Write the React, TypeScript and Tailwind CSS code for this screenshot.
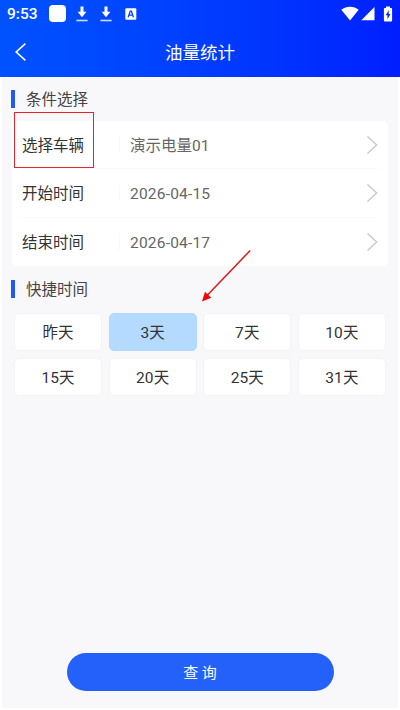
import { useState } from "react";

const fields = [
  { label: "选择车辆", value: "演示电量01", height: "h-[48px]", tracking: "" },
  { label: "开始时间", value: "2026-04-15", height: "h-[49px]", tracking: "tracking-[0.2px]" },
  { label: "结束时间", value: "2026-04-17", height: "h-[48px]", tracking: "tracking-[0.2px]" },
];

const ranges = ["昨天", "3天", "7天", "10天", "15天", "20天", "25天", "31天"];

function DownloadIcon() {
  return (
    <svg width="12" height="16" viewBox="0 0 12 16" fill="#fff">
      <path d="M4.5 0.5h3v5.3h2.9L6 11.2 1.6 5.8h2.9z" />
      <path d="M0.4 13.7h11.2v1.6H0.4z" fillOpacity="0.8" />
    </svg>
  );
}

function StatusBar() {
  return (
    <div className="flex h-[27px] items-center">
      <span className="ml-[7px] w-[42px] pt-[2px] text-[15.5px] font-medium leading-none">9:53</span>
      <span className="h-[17px] w-[17px] rounded-[4px] bg-white" />
      <div className="ml-[10px] flex gap-[12px]">
        <DownloadIcon />
        <DownloadIcon />
      </div>
      <svg className="ml-[13px]" width="12" height="12" viewBox="0 0 12 12">
        <rect x="0.3" y="0.2" width="11" height="11.6" rx="1" fill="#fff" />
        <path d="M3.2 9.2 5.2 3.2h1.2l2 6M4 7.2h3.6" fill="none" stroke="#0a45e8" strokeWidth="1.3" />
      </svg>
      <div className="ml-auto mr-[7px] flex items-center">
        <svg width="18" height="15" viewBox="0 0 18 15" fill="#fff">
          <path d="M0.3 3.8C5.2-0.3 12.8-0.3 17.7 3.8L9 14.5z" />
        </svg>
        <svg className="ml-[2px]" width="14" height="15" viewBox="0 0 14 15" fill="#fff">
          <path d="M13.5 1v13.3H0.3z" />
        </svg>
        <svg className="ml-[8px]" width="10" height="16" viewBox="0 0 10 16">
          <path d="M3 0.5h4V2h1.2q0.9 0 0.9 0.9v11.6q0 0.9-0.9 0.9H1.8q-0.9 0-0.9-0.9V2.9q0-0.9 0.9-0.9H3z" fill="#fff" />
          <path d="M5.7 4.2 2.7 9.3h1.8v3.9l3-5.2H5.7z" fill="#0829f5" />
        </svg>
      </div>
    </div>
  );
}

function SectionTitle({ children }: { children: string }) {
  return (
    <div className="flex h-[19px] items-center pl-[9px]">
      <span className="h-[18px] w-[4px] bg-[#2059f6]" />
      <h2 className="ml-[11px] pt-[4px] text-[15.5px] leading-none text-[#444]">{children}</h2>
    </div>
  );
}

export default function App() {
  const [selected, setSelected] = useState("3天");

  return (
    <div className="relative flex h-[710px] w-[400px] flex-col overflow-hidden border-b-2 border-white bg-[#f8f8fb] font-[Roboto,'Noto_Sans_CJK_SC',sans-serif]">
      <header className="h-[77px] shrink-0 bg-linear-to-r from-[#0052ff] to-[#001eff] text-white">
        <StatusBar />
        <div className="grid h-[50px] grid-cols-[60px_1fr_60px] items-center">
          <svg className="ml-[14px]" width="13" height="20" viewBox="0 0 13 20" fill="none" stroke="#fff" strokeWidth="1.6">
            <path d="M11.4 1.6 2.2 10l9.2 8.4" />
          </svg>
          <h1 className="pt-[3px] text-center text-[17.5px] leading-none">油量统计</h1>
        </div>
      </header>

      <main className="flex flex-1 flex-col border-x-2 border-white pt-[12px]">
        <SectionTitle>条件选择</SectionTitle>

        <div className="mx-[10px] mt-[13px] rounded-[5px] bg-white pl-[10px] pr-[10px]">
          {fields.map((f) => (
            <div key={f.label} className={`flex items-center border-b border-[#f9f9fa] last:border-0 ${f.height}`}>
              <span className="w-[97px] pt-[4px] text-[15.5px] leading-none text-[#333]">{f.label}</span>
              <span className="h-[17px] w-px bg-[#f9f9fa]" />
              <span className={`ml-[10px] pt-[4px] text-[15.5px] leading-none text-[#666] ${f.tracking}`}>{f.value}</span>
              <svg className="ml-auto" width="12" height="20" viewBox="0 0 12 20" fill="none" stroke="#c8c8c8" strokeWidth="1.4">
                <path d="M1.5 1.5 10.7 10l-9.2 8.5" />
              </svg>
            </div>
          ))}
        </div>

        <div className="mt-[13px]">
          <SectionTitle>快捷时间</SectionTitle>
        </div>

        <div className="mx-[12px] mt-[15px] grid grid-cols-4 gap-x-[6.5px] gap-y-[7px]">
          {ranges.map((r) => (
            <button
              key={r}
              type="button"
              onClick={() => setSelected(r)}
              className={`h-[38px] rounded-[5px] border pt-[3px] text-[15.5px] leading-none tracking-[0.1px] text-[#333] ${
                selected === r ? "border-[#b0d7fd] bg-[#b4daff]" : "border-[#f3f3f5] bg-white"
              }`}
            >
              {r}
            </button>
          ))}
        </div>

        <button
          type="button"
          className="mx-auto mb-[17px] mt-auto h-[38px] w-[267px] rounded-full bg-[#2460fa] pt-[2px] text-[15px] leading-none text-white"
        >
          查 询
        </button>
      </main>

      {/* marcação do campo e seta do tutorial */}
      <div className="pointer-events-none absolute left-[14px] top-[112px] h-[56px] w-[80px] border border-[#e3262b]" />
      <svg className="pointer-events-none absolute left-[200px] top-[248px]" width="52" height="56" viewBox="0 0 52 56">
        <path d="M50.2 2.5 7.5 47" stroke="#e3161c" strokeWidth="1.5" />
        <path d="M2 53.5 5 43.8 11.3 49.8z" fill="#f00808" />
      </svg>
    </div>
  );
}
